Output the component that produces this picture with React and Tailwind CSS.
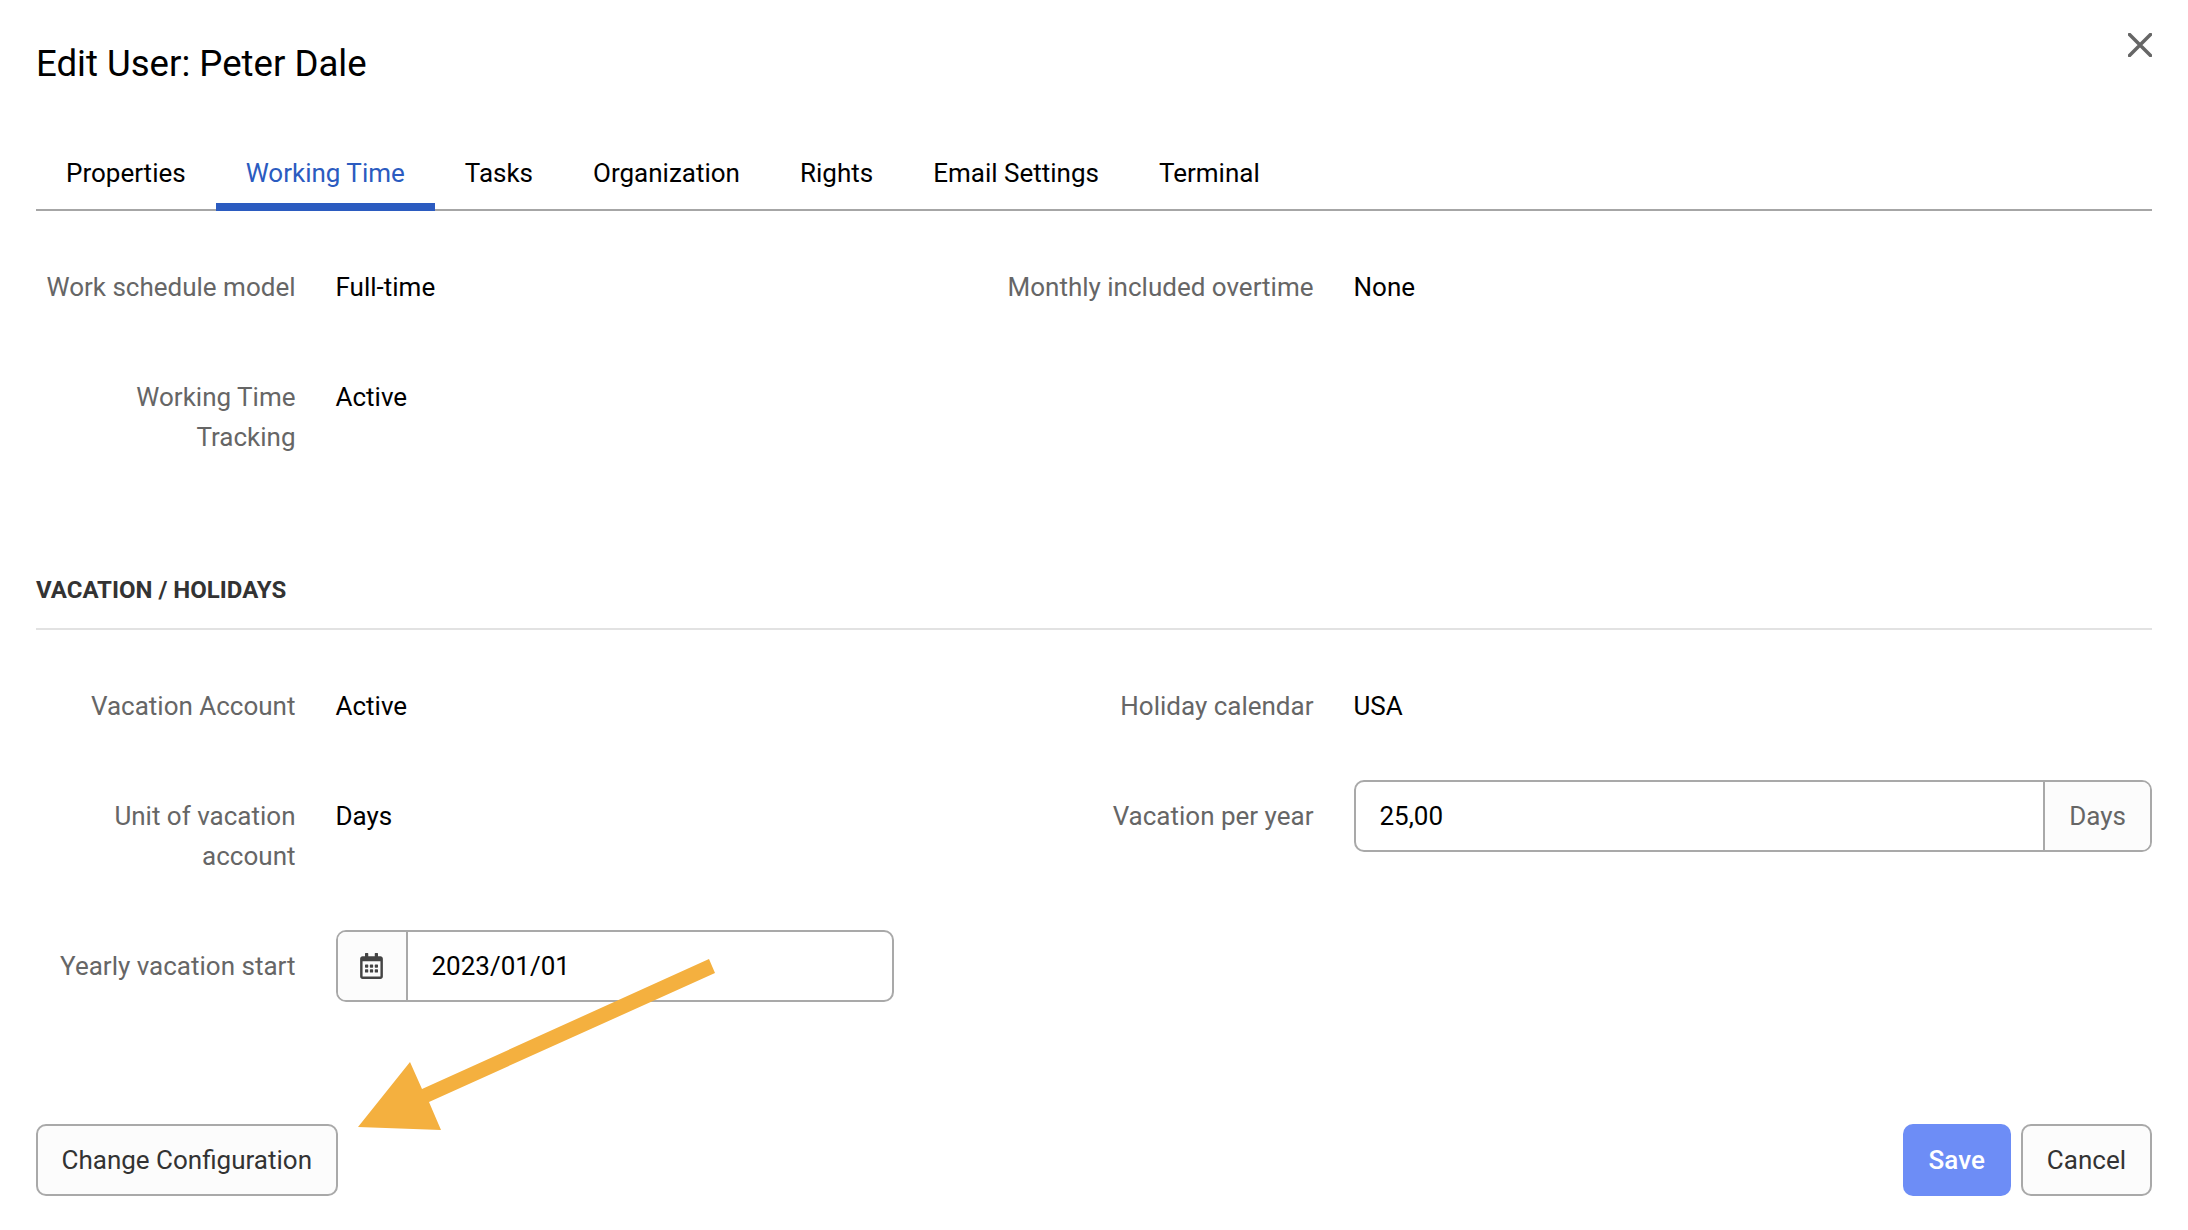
import { FaRegCalendarAlt } from "react-icons/fa";

const tabs = ["Properties", "Working Time", "Tasks", "Organization", "Rights", "Email Settings", "Terminal"];

const Field = ({ label, wide, children }) => (
  <div className="flex items-start gap-[40px]">
    <div className={wide ? "w-[306px] shrink-0 py-[16px] text-right text-[#666666]" : "w-[259.5px] shrink-0 py-[16px] text-right text-[#666666]"}>{label}</div>
    <div className="min-w-0 flex-1">{children}</div>
  </div>
);

const Value = ({ children }) => <div className="py-[16px] text-black">{children}</div>;

const App = () => {
  return (
    <div className="relative h-[1230px] w-[2188px] overflow-hidden bg-white pl-[36px] pr-[36px] pt-[39px] font-['Roboto',sans-serif] text-[26px] leading-[40px]">
      <h1 className="text-[36.6px] leading-[50px] text-black">Edit User: Peter Dale</h1>

      {/* close */}
      <button className="absolute left-[2128px] top-[33px]">
        <svg width="24" height="24" viewBox="0 0 24 24" stroke="#666666" strokeWidth="3.5" strokeLinecap="round">
          <path d="M1.5 1.5 22.5 22.5M22.5 1.5 1.5 22.5" />
        </svg>
      </button>

      {/* tabs */}
      <div className="mt-[46px] flex h-[76px] border-b-2 border-[#a6a6a6]">
        {tabs.map((t) =>
          t === "Working Time" ? (
            <div key={t} className="-mb-[2px] h-[76px] border-b-8 border-[#2b5bc0] px-[30px] pt-[18px] text-[#2b5bc0]">
              {t}
            </div>
          ) : (
            <div key={t} className="h-[76px] px-[30px] pt-[18px] text-black">
              {t}
            </div>
          )
        )}
      </div>

      <div className="mt-[40px] grid grid-cols-[971.5px_1fr]">
        <Field label="Work schedule model"><Value>Full-time</Value></Field>
        <Field wide label="Monthly included overtime"><Value>None</Value></Field>
      </div>
      <div className="mt-[38px]">
        <Field label={<>Working Time<br />Tracking</>}><Value>Active</Value></Field>
      </div>

      <div className="mt-[97px] border-b-2 border-[#e2e2e2] pb-[18px] text-[24px] font-bold leading-[40px] text-[#333333]">
        VACATION / HOLIDAYS
      </div>

      <div className="mt-[40px] grid grid-cols-[971.5px_1fr]">
        <Field label="Vacation Account"><Value>Active</Value></Field>
        <Field wide label="Holiday calendar"><Value>USA</Value></Field>
      </div>

      <div className="mt-[38px] grid grid-cols-[971.5px_1fr]">
        <Field label={<>Unit of vacation<br />account</>}><Value>Days</Value></Field>
        <Field wide label="Vacation per year">
          <div className="flex h-[72px] items-stretch rounded-[10px] border-2 border-[#a9a9a9]">
            <div className="flex flex-1 items-center pl-[24px] text-black">25,00</div>
            <div className="flex w-[107px] items-center justify-center rounded-r-[8px] border-l-2 border-[#a9a9a9] bg-[#fcfcfc] text-[#666666]">Days</div>
          </div>
        </Field>
      </div>

      <div className="mt-[38px]">
        <Field label="Yearly vacation start">
          <div className="flex h-[72px] w-[558px] items-stretch rounded-[10px] border-2 border-[#a9a9a9]">
            <div className="flex w-[70px] items-center justify-center rounded-l-[8px] border-r-2 border-[#a9a9a9] bg-[#fcfcfc]">
              <FaRegCalendarAlt className="h-[26px] w-[23px] text-[#444444]" />
            </div>
            <div className="flex flex-1 items-center pl-[24px] text-black">2023/01/01</div>
          </div>
        </Field>
      </div>

      <div className="mt-[122px] flex justify-between">
        <button className="h-[72px] rounded-[10px] border-2 border-[#a9a9a9] bg-[#fcfcfc] px-[23.5px] text-[#333333]">Change Configuration</button>
        <div className="flex gap-[10px]">
          <button className="h-[72px] rounded-[10px] bg-[#6d8df6] px-[26px] font-medium text-white">Save</button>
          <button className="h-[72px] rounded-[10px] border-2 border-[#a9a9a9] bg-[#fcfcfc] px-[24px] text-[#333333]">Cancel</button>
        </div>
      </div>

      {/* annotation arrow */}
      <svg className="pointer-events-none absolute left-0 top-0" width="2188" height="1230">
        <polygon points="709,959 715,973 429,1102 441,1130 358,1127 410,1062 422,1089" fill="#f4b03f" />
      </svg>
    </div>
  );
};

export default App;
